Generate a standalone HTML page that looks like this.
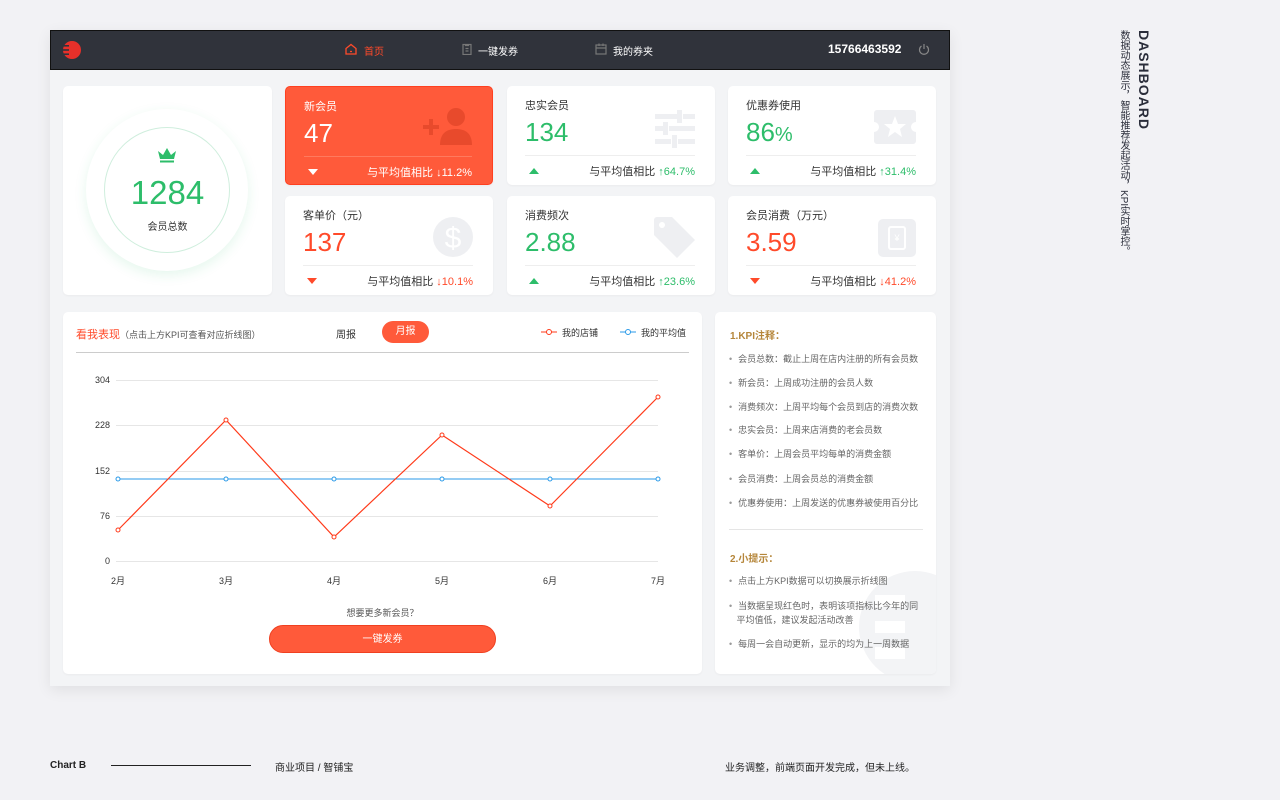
<!DOCTYPE html>
<html><head><meta charset="utf-8"><style>
*{margin:0;padding:0;box-sizing:border-box}
body{width:1280px;height:800px;background:#f2f2f5;font-family:"Liberation Sans","Noto Sans CJK SC",sans-serif;position:relative;overflow:hidden;color:#333}
.a{position:absolute}
.frame{left:50px;top:30px;width:900px;height:656px;background:#f3f4f6;box-shadow:0 4px 14px rgba(0,0,0,.08)}
.bar{left:50px;top:30px;width:900px;height:40px;background:#30333b;border:1px solid #111}
.card{background:#fff;border-radius:5px;box-shadow:0 1px 2px rgba(0,0,0,.04)}
.lbl{font-size:11px;color:#333;left:18px;top:11px}
.num{font-size:26px;left:18px;top:31px;font-family:"Liberation Sans",sans-serif}
.div{left:18px;right:20px;top:69px;height:1px;background:#eee}
.cmp{right:20px;top:77px;font-size:11px;color:#333}
.tri{left:22px;top:82px;width:0;height:0;border-left:5px solid transparent;border-right:5px solid transparent}
.dn{border-top:6px solid #ff4a2a}.up{border-bottom:6px solid #2dbd6a}
.g{color:#2dbd6a}.r{color:#ff4a2a}
.tip{font-size:9px;color:#666;left:14px}
.tip:before{content:"•";margin-right:6px;color:#999}
</style></head><body>
<div class="a frame"></div>
<div class="a bar"></div>
<svg class="a" style="left:62px;top:40px" width="20" height="20" viewBox="0 0 20 20"><circle cx="10" cy="10" r="9" fill="#e8302a"/><rect x="0" y="5" width="7" height="1.6" fill="#30333b"/><rect x="0" y="9.2" width="7" height="1.6" fill="#30333b"/><rect x="0" y="13.4" width="7" height="1.6" fill="#30333b"/></svg>
<svg class="a" style="left:345px;top:43px" width="12" height="12" viewBox="0 0 12 12" fill="none" stroke="#ff4a2a" stroke-width="1.3"><path d="M1 5.5L6 1.5L11 5.5V11H1Z"/><path d="M5 8.5H7"/></svg>
<div class="a" style="left:364px;top:43px;font-size:10px;color:#ff4a2a">首页</div>
<svg class="a" style="left:462px;top:43px" width="10" height="12" viewBox="0 0 10 12" fill="none" stroke="#777" stroke-width="1.2"><rect x="1" y="1.5" width="8" height="10"/><path d="M3.5 1V2.5H6.5V1M3.5 5.5H6.5M3.5 8H6.5"/></svg>
<div class="a" style="left:478px;top:43px;font-size:10px;color:#fff">一键发券</div>
<svg class="a" style="left:595px;top:43px" width="12" height="12" viewBox="0 0 12 12" fill="none" stroke="#777" stroke-width="1.2"><rect x="1" y="2" width="10" height="9"/><path d="M1 5H11M4 0.5V3M8 0.5V3"/></svg>
<div class="a" style="left:613px;top:43px;font-size:10px;color:#fff">我的券夹</div>
<div class="a" style="left:828px;top:42px;font-size:12px;color:#fff;font-weight:bold">15766463592</div>
<svg class="a" style="left:918px;top:43px" width="12" height="13" viewBox="0 0 12 13" fill="none" stroke="#888" stroke-width="1.2"><path d="M3.5 3A4.5 4.5 0 1 0 8.5 3M6 1V6"/></svg>

<div class="a card" style="left:63px;top:86px;width:209px;height:209px">
<div class="a" style="left:23px;top:23px;width:162px;height:162px;border-radius:50%;background:#fff;box-shadow:0 4px 12px rgba(45,189,106,.12)"></div>
<div class="a" style="left:41px;top:41px;width:126px;height:126px;border-radius:50%;border:1px solid #cfeedd"></div>
<svg class="a" style="left:94px;top:61px" width="20" height="16" viewBox="0 0 20 16"><path d="M1 4L6 8L10 1L14 8L19 4L17 12H3Z" fill="#2dbd6a"/><rect x="3" y="13.5" width="14" height="2" fill="#2dbd6a"/></svg>
<div class="a g" style="left:0;width:209px;text-align:center;top:88px;font-size:33px">1284</div>
<div class="a" style="left:0;width:209px;text-align:center;top:132px;font-size:10px;color:#333">会员总数</div>
</div>

<div class="a card" style="left:285px;top:86px;width:208px;height:99px;background:#ff5a3a;border:1px solid #ff4020">
<div class="a lbl" style="color:#fff">新会员</div><div class="a num" style="color:#fff">47</div>
<div class="a div" style="background:#ff7a5e"></div><div class="a tri" style="border-top:6px solid #fff"></div>
<div class="a cmp" style="color:#fff">与平均值相比 ↓11.2%</div>
<svg class="a" style="left:137px;top:20px" width="50" height="40" viewBox="0 0 50 40" fill="#e84a2c"><circle cx="33" cy="10" r="9"/><path d="M17 38C17 26 24 22 33 22S49 26 49 38Z"/><rect x="0" y="18" width="16" height="4"/><rect x="6" y="12" width="4" height="16"/></svg>
</div>
<div class="a card" style="left:507px;top:86px;width:208px;height:99px">
<div class="a lbl">忠实会员</div><div class="a num g">134</div><div class="a div"></div><div class="a tri up"></div>
<div class="a cmp">与平均值相比 <span class="g">↑64.7%</span></div>
<svg class="a" style="left:148px;top:24px" width="40" height="38" viewBox="0 0 40 38" fill="#eeeff2"><rect x="0" y="4" width="22" height="5"/><rect x="28" y="4" width="12" height="5"/><rect x="22" y="0" width="5" height="13"/><rect x="0" y="16" width="8" height="5"/><rect x="14" y="16" width="26" height="5"/><rect x="8" y="12" width="5" height="13"/><rect x="0" y="29" width="16" height="5"/><rect x="23" y="29" width="17" height="5"/><rect x="17" y="25" width="5" height="13"/></svg>
</div>
<div class="a card" style="left:728px;top:86px;width:208px;height:99px">
<div class="a lbl">优惠券使用</div><div class="a num g">86<span style="font-size:20px">%</span></div><div class="a div"></div><div class="a tri up"></div>
<div class="a cmp">与平均值相比 <span class="g">↑31.4%</span></div>
<svg class="a" style="left:146px;top:24px" width="42" height="34" viewBox="0 0 42 34"><path d="M3 0H39A3 3 0 0 1 42 3V12A5 5 0 0 0 42 22V31A3 3 0 0 1 39 34H3A3 3 0 0 1 0 31V22A5 5 0 0 0 0 12V3A3 3 0 0 1 3 0Z" fill="#eeeff2"/><path d="M21 6L24 14L32 14L26 19L28 27L21 22L14 27L16 19L10 14L18 14Z" fill="#fff"/></svg>
</div>
<div class="a card" style="left:285px;top:196px;width:208px;height:99px">
<div class="a lbl">客单价（元）</div><div class="a num r">137</div><div class="a div"></div><div class="a tri dn"></div>
<div class="a cmp">与平均值相比 <span class="r">↓10.1%</span></div>
<svg class="a" style="left:148px;top:21px" width="40" height="40" viewBox="0 0 40 40"><circle cx="20" cy="20" r="20" fill="#eeeff2"/><text x="20" y="31" text-anchor="middle" font-size="30" fill="#fff" font-family="Liberation Sans">$</text></svg>
</div>
<div class="a card" style="left:507px;top:196px;width:208px;height:99px">
<div class="a lbl">消费频次</div><div class="a num g">2.88</div><div class="a div"></div><div class="a tri up"></div>
<div class="a cmp">与平均值相比 <span class="g">↑23.6%</span></div>
<svg class="a" style="left:147px;top:21px" width="42" height="42" viewBox="0 0 42 42"><path d="M0 3A3 3 0 0 1 3 0H18L41 23L23 41L0 18Z" fill="#eeeff2"/><circle cx="8" cy="8" r="3" fill="#fff"/></svg>
</div>
<div class="a card" style="left:728px;top:196px;width:208px;height:99px">
<div class="a lbl">会员消费（万元）</div><div class="a num r">3.59</div><div class="a div"></div><div class="a tri dn"></div>
<div class="a cmp">与平均值相比 <span class="r">↓41.2%</span></div>
<svg class="a" style="left:150px;top:23px" width="38" height="38" viewBox="0 0 38 38"><rect width="38" height="38" rx="5" fill="#eeeff2"/><rect x="11" y="8" width="16" height="22" rx="2" fill="none" stroke="#fff" stroke-width="2"/><text x="19" y="22" text-anchor="middle" font-size="9" fill="#fff">¥</text></svg>
</div>

<div class="a card" style="left:63px;top:312px;width:639px;height:362px">
<div class="a" style="left:13px;top:14px;font-size:11px;color:#ff4a2a">看我表现<span style="color:#555;font-size:9px">（点击上方KPI可查看对应折线图）</span></div>
<div class="a" style="left:273px;top:14px;font-size:10px;color:#333">周报</div>
<div class="a" style="left:319px;top:9px;width:47px;height:22px;border-radius:11px;background:#ff5a3a;color:#fff;font-size:10px;text-align:center;line-height:22px">月报</div>
<div class="a" style="left:499px;top:14px;font-size:9px;color:#333">我的店铺</div>
<div class="a" style="left:578px;top:14px;font-size:9px;color:#333">我的平均值</div>
<div class="a" style="left:13px;top:40px;width:613px;height:1px;background:#ccc"></div>
<div class="a" style="left:0;width:639px;text-align:center;top:294px;font-size:9px;color:#555">想要更多新会员？</div>
<div class="a" style="left:206px;top:313px;width:227px;height:28px;border-radius:14px;background:#ff5a3a;color:#fff;font-size:10px;text-align:center;line-height:28px;border:1px solid #f04020">一键发券</div>
</div>

<div class="a card" style="left:715px;top:312px;width:221px;height:362px;overflow:hidden">
<svg class="a" style="left:140px;top:255px" width="90" height="110" viewBox="0 0 90 110"><circle cx="60" cy="60" r="56" fill="#f3f4f6"/><rect x="20" y="28" width="30" height="12" fill="#fff"/><rect x="20" y="54" width="30" height="12" fill="#fff"/><rect x="20" y="80" width="30" height="12" fill="#fff"/></svg>
<div class="a" style="left:15px;top:15px;font-size:10px;color:#b5863a;font-weight:bold">1.KPI注释：</div>
<div class="a tip" style="top:40px">会员总数：截止上周在店内注册的所有会员数</div>
<div class="a tip" style="top:64px">新会员：上周成功注册的会员人数</div>
<div class="a tip" style="top:88px">消费频次：上周平均每个会员到店的消费次数</div>
<div class="a tip" style="top:111px">忠实会员：上周来店消费的老会员数</div>
<div class="a tip" style="top:135px">客单价：上周会员平均每单的消费金额</div>
<div class="a tip" style="top:160px">会员消费：上周会员总的消费金额</div>
<div class="a tip" style="top:184px">优惠券使用：上周发送的优惠券被使用百分比</div>
<div class="a" style="left:14px;top:217px;width:194px;height:1px;background:#e5e5e5"></div>
<div class="a" style="left:15px;top:238px;font-size:10px;color:#b5863a;font-weight:bold">2.小提示：</div>
<div class="a tip" style="top:262px">点击上方KPI数据可以切换展示折线图</div>
<div class="a tip" style="top:287px;line-height:14px">当数据呈现红色时，表明该项指标比今年的同<br>&nbsp;&nbsp;&nbsp;平均值低，建议发起活动改善</div>
<div class="a tip" style="top:325px">每周一会自动更新，显示的均为上一周数据</div>
</div>

<svg class="a" style="left:0;top:0" width="1280" height="800" font-family="Liberation Sans,Noto Sans CJK SC,sans-serif" font-size="9" fill="#333">
<g stroke="#e6e6e6" stroke-width="1"><path d="M116 380.5H658M116 425.5H658M116 471.5H658M116 516.5H658M116 561.5H658"/></g>
<g text-anchor="end"><text x="110" y="383">304</text><text x="110" y="428">228</text><text x="110" y="474">152</text><text x="110" y="519">76</text><text x="110" y="564">0</text></g>
<g text-anchor="middle"><text x="118" y="584">2月</text><text x="226" y="584">3月</text><text x="334" y="584">4月</text><text x="442" y="584">5月</text><text x="550" y="584">6月</text><text x="658" y="584">7月</text></g>
<path d="M118 479H658" stroke="#2a9ae8" stroke-width="1"/>
<g fill="#fff" stroke="#2a9ae8"><circle cx="118" cy="479" r="2"/><circle cx="226" cy="479" r="2"/><circle cx="334" cy="479" r="2"/><circle cx="442" cy="479" r="2"/><circle cx="550" cy="479" r="2"/><circle cx="658" cy="479" r="2"/></g>
<path d="M118 530L226 420L334 537L442 435L550 506L658 397" fill="none" stroke="#ff3a1a" stroke-width="1.2"/>
<g fill="#fff" stroke="#ff3a1a"><circle cx="118" cy="530" r="2"/><circle cx="226" cy="420" r="2"/><circle cx="334" cy="537" r="2"/><circle cx="442" cy="435" r="2"/><circle cx="550" cy="506" r="2"/><circle cx="658" cy="397" r="2"/></g>
<path d="M541 332H557" stroke="#ff3a1a"/><circle cx="549" cy="332" r="2.5" fill="#fff" stroke="#ff3a1a"/>
<path d="M620 332H636" stroke="#2a9ae8"/><circle cx="628" cy="332" r="2.5" fill="#fff" stroke="#2a9ae8"/>
</svg>

<div class="a" style="left:1117px;top:30px;writing-mode:vertical-rl;white-space:nowrap;font-size:10px;line-height:12px;color:#2a2d3a">数据动态展示，智能推荐发起活动，KPI实时掌控。</div>
<div class="a" style="left:1136px;top:30px;writing-mode:vertical-rl;white-space:nowrap;font-size:14px;line-height:16px;font-weight:bold;color:#2a2d3a;letter-spacing:1px">DASHBOARD</div>

<div class="a" style="left:50px;top:760px;font-size:10px;font-weight:bold;color:#222">Chart B</div>
<div class="a" style="left:111px;top:765px;width:140px;height:1px;background:#222"></div>
<div class="a" style="left:275px;top:759px;font-size:10px;color:#222">商业项目 / 智铺宝</div>
<div class="a" style="left:725px;top:759px;font-size:10px;color:#222">业务调整，前端页面开发完成，但未上线。</div>
</body></html>
